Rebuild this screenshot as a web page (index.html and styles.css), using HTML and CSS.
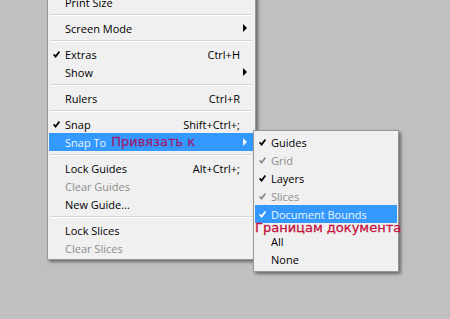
FILE: index.html
```html
<!DOCTYPE html>
<html lang="en">
<head>
    <meta charset="UTF-8">
    <title>View menu - Snap To</title>
    <link rel="stylesheet" href="styles.css">
</head>
<body>
    <div class="menu">
        <div class="item"><span class="chk"></span><span class="label">Print Size</span></div>
        <div class="sep"></div>
        <div class="item"><span class="chk"></span><span class="label">Screen Mode</span><span class="arrow"></span></div>
        <div class="sep"></div>
        <div class="item">
            <span class="chk"><svg width="7" height="7" viewBox="0 0 7 7"><path d="M0.6 3.4 L2.6 5.6 L6.4 0.6"/></svg></span>
            <span class="label">Extras</span><span class="key">Ctrl+H</span><span class="noarrow"></span>
        </div>
        <div class="item"><span class="chk"></span><span class="label">Show</span><span class="arrow"></span></div>
        <div class="sep"></div>
        <div class="item"><span class="chk"></span><span class="label">Rulers</span><span class="key">Ctrl+R</span><span class="noarrow"></span></div>
        <div class="sep"></div>
        <div class="item">
            <span class="chk"><svg width="7" height="7" viewBox="0 0 7 7"><path d="M0.6 3.4 L2.6 5.6 L6.4 0.6"/></svg></span>
            <span class="label">Snap</span><span class="key">Shift+Ctrl+;</span><span class="noarrow"></span>
        </div>
        <div class="item active">
            <span class="chk"></span>
            <span class="label">Snap To<span class="note note-blue">Привязать к</span></span>
            <span class="arrow"></span>
        </div>
        <div class="sep"></div>
        <div class="item"><span class="chk"></span><span class="label">Lock Guides</span><span class="key">Alt+Ctrl+;</span><span class="noarrow"></span></div>
        <div class="item disabled"><span class="chk"></span><span class="label">Clear Guides</span></div>
        <div class="item"><span class="chk"></span><span class="label">New Guide...</span></div>
        <div class="sep"></div>
        <div class="item"><span class="chk"></span><span class="label">Lock Slices</span></div>
        <div class="item disabled"><span class="chk"></span><span class="label">Clear Slices</span></div>

        <!-- flyout for Snap To -->
        <div class="submenu">
            <div class="item">
                <span class="chk"><svg width="7" height="7" viewBox="0 0 7 7"><path d="M0.6 3.4 L2.6 5.6 L6.4 0.6"/></svg></span>
                <span class="label">Guides</span>
            </div>
            <div class="item disabled">
                <span class="chk"><svg width="7" height="7" viewBox="0 0 7 7"><path d="M0.6 3.4 L2.6 5.6 L6.4 0.6"/></svg></span>
                <span class="label">Grid</span>
            </div>
            <div class="item">
                <span class="chk"><svg width="7" height="7" viewBox="0 0 7 7"><path d="M0.6 3.4 L2.6 5.6 L6.4 0.6"/></svg></span>
                <span class="label">Layers</span>
            </div>
            <div class="item disabled">
                <span class="chk"><svg width="7" height="7" viewBox="0 0 7 7"><path d="M0.6 3.4 L2.6 5.6 L6.4 0.6"/></svg></span>
                <span class="label">Slices</span>
            </div>
            <div class="item active">
                <span class="chk"><svg width="7" height="7" viewBox="0 0 7 7"><path d="M0.6 3.4 L2.6 5.6 L6.4 0.6"/></svg></span>
                <span class="label">Document Bounds</span>
            </div>
            <div class="sub-note"><span class="note note-red">Границам документа</span></div>
            <div class="item"><span class="chk"></span><span class="label">All</span></div>
            <div class="item"><span class="chk"></span><span class="label">None</span></div>
        </div>
    </div>
</body>
</html>
```

FILE: styles.css
```css
body {
    margin: 0;
    background: #c0c0c0;
    font-family: "Open Sans", "Noto Sans", sans-serif;
    font-size: 11px;
    color: #000;
    height: 319px;
    overflow: hidden;
}
.menu {
    position: relative;
    width: 207px;
    margin: -10px 0 0 47px;
    padding: 2px 0;
    background: #f0f0f0;
    border: 1px solid #979797;
    box-shadow: 2px 2px 3px rgba(0,0,0,0.45);
}
.item {
    display: flex;
    align-items: center;
    height: 18px;
    margin: 0 1px;
    white-space: nowrap;
}
.chk {
    width: 16px;
    flex: none;
    display: flex;
    align-items: center;
    padding-left: 4px;
    box-sizing: border-box;
}
.chk svg path {
    fill: none;
    stroke: #000;
    stroke-width: 1.7;
}
.label {
    flex: 1;
    display: flex;
    align-items: center;
}
.key {
    flex: none;
}
.arrow, .noarrow {
    width: 14px;
    flex: none;
    display: flex;
    align-items: center;
    justify-content: flex-end;
    padding-right: 7px;
    box-sizing: border-box;
}
.arrow::after {
    content: "";
    border-left: 4px solid #000;
    border-top: 4px solid transparent;
    border-bottom: 4px solid transparent;
}
.sep {
    height: 0;
    margin: 3px 2px;
    border-top: 1px solid #d7d7d7;
    border-bottom: 1px solid #fff;
}
.active {
    background: #3399ff;
    color: #eef5ff;
}
.active .chk svg path {
    stroke: #fff;
}
.active .arrow::after {
    border-left-color: #eef5ff;
}
.disabled {
    color: #8d8d8d;
}
.disabled .chk svg path {
    stroke: #8d8d8d;
}
.note {
    font-family: "DejaVu Sans", sans-serif;
    font-size: 13px;
    line-height: 14px;
    -webkit-text-stroke: 0.3px currentColor;
}
.note-blue {
    margin-left: 5px;
    color: #9b1d72;
}
.note-red {
    color: #c4123e;
}
.submenu {
    position: absolute;
    left: 205px;
    top: 139px;
    width: 144px;
    padding: 2px 0 3px;
    background: #f0f0f0;
    border: 1px solid #979797;
    box-shadow: 2px 2px 3px rgba(0,0,0,0.45);
}
.sub-note {
    height: 10px;
    padding-left: 1px;
    white-space: nowrap;
}
.sub-note .note {
    display: block;
    line-height: 11px;
    margin-top: -1px;
}
```
